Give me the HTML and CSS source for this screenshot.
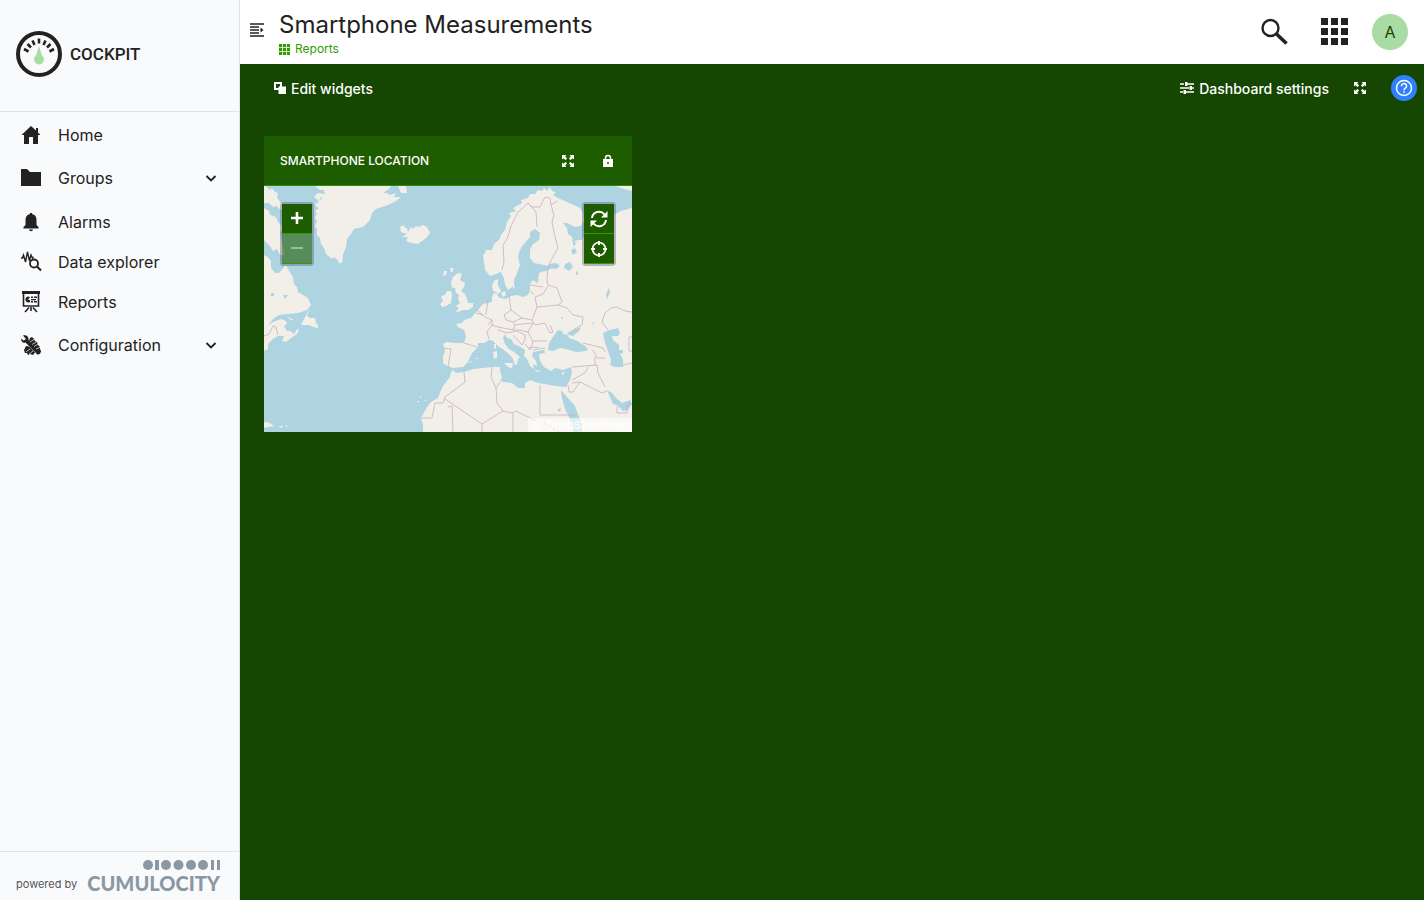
FILE: index.html
```html
<!DOCTYPE html>
<html lang="en">
<head>
  <meta charset="utf-8">
  <title>Smartphone Measurements</title>
  <link rel="stylesheet" href="styles.css">
</head>
<body>
  <div class="app">
    <aside class="navigator">
      <div class="app-title">
        <svg class="app-logo" viewBox="0 0 46 46">
          <circle cx="23" cy="23" r="21" fill="none" stroke="#222" stroke-width="4"/>
          <path d="M8 18l4.500 2.500M11.500 13l3.500 3.500M16.500 9.500l2 4.500M23 7.500v5M29.500 9.500l-2 4.500M34.500 13l-3.500 3.500M38 18l-4.500 2.500" fill="none" stroke="#222" stroke-width="2.600"/>
          <path d="M23 15l3 9.500a5 5 0 1 1-6 0z" fill="#a9dba4"/>
        </svg>
        <span>COCKPIT</span>
      </div>

      <nav class="nav">
        <a class="nav-item" href="#">
          <svg class="nav-icon" viewBox="0 0 22 22"><path d="M11 2L1.500 11H4v9h5v-7h4v7h5v-9h2.500L18 8.500V4h-2v2.500z" fill="#222"/></svg>
          <span>Home</span>
        </a>
        <a class="nav-item parent" href="#">
          <svg class="nav-icon" viewBox="0 0 22 22"><path d="M1 2h6l3 3h11v14H1z" fill="#222"/></svg>
          <span>Groups</span>
          <svg class="chevron" viewBox="0 0 12 12"><path d="M1.500 4L6 8.500 10.500 4" fill="none" stroke="#222" stroke-width="1.800"/></svg>
        </a>
        <a class="nav-item" href="#">
          <svg class="nav-icon" viewBox="0 0 22 22"><path d="M10 3V2h2v1c3 .500 4.500 3 4.500 6v5l2 2v1.500h-15V16l2-2V9C5.500 6 7 3.500 10 3zM9 18.500h4a2 1.800 0 0 1-4 0z" fill="#222"/></svg>
          <span>Alarms</span>
        </a>
        <a class="nav-item" href="#">
          <svg class="nav-icon" viewBox="0 0 22 22" fill="none" stroke="#222"><path d="M1 7h1.500l1-3 2 7 2-10 2 9 1.500-6 1.500 3 1-1" stroke-width="1.400"/><circle cx="14" cy="12.500" r="4" stroke-width="1.800"/><path d="M17 15.500l4 4" stroke-width="2.200"/></svg>
          <span>Data explorer</span>
        </a>
        <a class="nav-item" href="#">
          <svg class="nav-icon" viewBox="0 0 22 22"><path d="M2 0h18v3H2z" fill="#222"/><path d="M3.500 2v13h15V2M9 16.500l-4 4.500M13 16.500l4 4.500M11 16v4" fill="none" stroke="#222" stroke-width="1.600"/><path d="M10 6a3 3 0 1 0 0 5V9H8zM11 5.500h2V7h-2zM14 5.500h3V7h-3zM11 8h5v1.200h-5zM11 10h2v1.500h-2zM14 10h3v1.500h-3z" fill="#222"/></svg>
          <span>Reports</span>
        </a>
        <a class="nav-item parent" href="#">
          <svg class="nav-icon" viewBox="0 0 22 22"><path d="M3 1.500c3-1 6 1 5.500 4.500L21 17.500 18 21 5.500 8.500C3 9.500 1 7.500 1 4.500l2.500 2L6 5z" fill="#222"/><path d="M10 4l2-1 2 2 1 2 2 1 1 3 2 2v2l1 2-1 3h-3L9 7zM6 12l3 .500 6 6-2 2.500-3-1-2 1-1-2H5l-1-3z" fill="#222"/><path d="M10 8l5-3M12 10.500l5-3M14 12.500l5-3M16 15l5-2M6 18l4-3M9 20l4-3" stroke="#f9fafc" stroke-width=".700"/></svg>
          <span>Configuration</span>
          <svg class="chevron" viewBox="0 0 12 12"><path d="M1.500 4L6 8.500 10.500 4" fill="none" stroke="#222" stroke-width="1.800"/></svg>
        </a>
      </nav>

      <footer class="powered">
        <span class="powered-by">powered by</span>
        <div class="brand">
          <svg class="brand-dots" viewBox="0 0 77 10" fill="#8b97a3"><circle cx="5" cy="5" r="5"/><path d="M12 0h4v10h-4zM68 0h3v10h-3zM74 0h3v10h-3z"/><circle cx="23" cy="5" r="5"/><circle cx="35.500" cy="5" r="5"/><circle cx="48" cy="5" r="5"/><circle cx="60" cy="5" r="5"/></svg>
          <span class="brand-name">CUMULOCITY</span>
        </div>
      </footer>
    </aside>

    <main class="main">
      <header class="header">
        <button class="icon-btn toggle" aria-label="Toggle navigation">
          <svg viewBox="0 0 14 14" width="14" height="14"><path d="M0 1h14M0 4h9M0 7h9M0 10h9M0 13h14" stroke="#222" stroke-width="1.300"/><path d="M10.500 4.500L13.500 7l-3 2.500z" fill="#222"/></svg>
        </button>
        <div class="page-title">
          <h1>Smartphone Measurements</h1>
          <a class="breadcrumb" href="#">
            <svg viewBox="0 0 11 11" width="11" height="11"><path d="M0 0h3.200v3.200H0zM4 0h3.200v3.200H4zM8 0h3v3.200H8zM0 4h3.200v3.200H0zM4 4h3.200v3.200H4zM8 4h3v3.200H8zM0 8h3.200v3H0zM4 8h3.200v3H4zM8 8h3v3H8z" fill="#2f9c00"/></svg>
            <span>Reports</span>
          </a>
        </div>
        <div class="header-tools">
          <button class="icon-btn" aria-label="Search">
            <svg viewBox="0 0 28 28" width="28" height="28" fill="none" stroke="#222"><circle cx="10.500" cy="10" r="8" stroke-width="2.400"/><path d="M16.500 16l10 9.500" stroke-width="3.600"/></svg>
          </button>
          <button class="icon-btn" aria-label="Applications">
            <svg viewBox="0 0 28 28" width="28" height="28"><path d="M1 0h7v7H1zM11 0h7v7h-7zM21 0h7v7h-7zM1 10h7v7H1zM11 10h7v7h-7zM21 10h7v7h-7zM1 20h7v7H1zM11 20h7v7h-7zM21 20h7v7h-7z" fill="#222"/></svg>
          </button>
          <button class="avatar">A</button>
        </div>
      </header>

      <div class="action-bar">
        <button class="action">
          <svg viewBox="0 0 12 12" width="12" height="12"><path d="M1 1h6v6H1z" fill="none" stroke="#fff" stroke-width="2"/><path d="M4.500 4.500H12V12H4.500z" fill="#fff"/></svg>
          Edit widgets
        </button>
        <div class="action-right">
          <button class="action">
            <svg viewBox="0 0 14 12" width="14" height="12"><path d="M0 2h4M7 2h7M0 6h9M12 6h2M0 10h3M6 10h8" stroke="#fff" stroke-width="1.500"/><path d="M5 0h2.500v4H5zM9.500 4H12v4H9.500zM3.500 8H6v4H3.500z" fill="#fff"/></svg>
            Dashboard settings
          </button>
          <button class="icon-btn" aria-label="Full screen">
            <svg viewBox="0 0 12 12" width="12" height="12"><path d="M0 0h4.500L3.200 1.300 5 3.500 3.500 5 1.300 3.200 0 4.500zM12 0v4.500l-1.300-1.300L8.500 5 7 3.500l1.800-2.200L7.500 0zM0 12V7.500l1.300 1.300L3.500 7 5 8.500l-1.800 2.200L4.500 12zM12 12H7.500l1.300-1.300L7 8.500 8.500 7l2.200 1.800L12 7.500z" fill="#fff"/></svg>
          </button>
          <button class="help" aria-label="Help">
            <svg viewBox="0 0 18 18" width="18" height="18" fill="none" stroke="#fff"><circle cx="9" cy="9" r="7.500" stroke-width="1.500"/><path d="M6.500 7.200a2.500 2.500 0 1 1 3.800 2Q9 10 9 11.200M9 12.200v1.600" stroke-width="1.500"/></svg>
          </button>
        </div>
      </div>

      <section class="dashboard">
        <article class="widget">
          <div class="widget-header">
            <h2>SMARTPHONE LOCATION</h2>
            <button class="icon-btn" aria-label="Expand">
              <svg viewBox="0 0 12 12" width="12" height="12"><path d="M0 0h4.500L3.200 1.300 5 3.500 3.500 5 1.300 3.200 0 4.500zM12 0v4.500l-1.300-1.300L8.500 5 7 3.500l1.800-2.200L7.500 0zM0 12V7.500l1.300 1.300L3.500 7 5 8.500l-1.800 2.200L4.500 12zM12 12H7.500l1.300-1.300L7 8.500 8.500 7l2.200 1.800L12 7.500z" fill="#fff"/></svg>
            </button>
            <button class="icon-btn" aria-label="Lock">
              <svg viewBox="0 0 12 14" width="12" height="14"><path d="M1 5h10v8H1z" fill="#fff"/><path d="M3.500 6V4a2.500 2.500 0 0 1 5 0v2" fill="none" stroke="#fff" stroke-width="1.500"/><circle cx="6" cy="9" r="1" fill="#1d5d00"/></svg>
            </button>
          </div>
          <div class="map">
            <svg class="map-tiles" viewBox="0 0 368 246" preserveAspectRatio="xMidYMid slice">
              <g class="land">
                <!-- North America -->
                <path d="M0 0L3 1 6 4 8 2 11 6 14 7 13 11 16 16 21 21 17 24 12 20 9 21 5 17 0 17z"/>
                <path d="M0 22L5 25 6 29 12 31 14 36 19 41 16 47 18 57 21 69 16 69 13 63 9 65 6 60 0 54z"/>
                <path d="M0 69L4 71 7 75 7 82 11 87 15 87 20 81 22 79 25 85 29 91 30 98 33 101 34 106 39 109 44 112 47 119 43 124 34 127 24 128 15 129 10 132 4 139 9 136 17 133 22 135 23 138 20 140 23 145 26 145 30 148 33 143 35 144 33 148 27 152 22 156 18 155 20 150 14 150 9 153 4 158 4 163 0 165z"/>
                <path d="M46 122L43 130 46 132 51 132 52 137 54 139 54 143 51 141 49 141 45 139 37 139 40 133z"/>
                <path d="M22 130l8 4-3 0zM0 236l6 1 4 3-6 1-4 1zM14 240l5 0-1 2zM21 239l3 1-2 1z"/>
                <!-- Greenland -->
                <path d="M51 0l5 4 4 0 1 4-8-1 3 4 3 1-6 4 4 1-5 3 3 2-4 3 2 2-2 5 2 3-2 5 2 3 0 6 3 3 1 6 3 4 2 6 6 5 1-2 4 2 2 4 3 0 1-8 3-8 1-8 4-5 3-5 9-2 7-7 2-7 4-4 12-4 8-4 5-4-7 0 2-4-6 2-3-2-4 0 6-4 2-3z"/>
                <path d="M134 0h8l1 7-6 0zM50 11l4-4 3 3-2 5zM51 18l5-2 2 4-4 2z"/>
                <!-- Iceland -->
                <path d="M136 41l4-2 1 3 2 0 1 4 3-5 2 2 3-3 3 1 4-2 4 2 3 6-4 5-8 6-6-1-6-2 2-4-6 0 5-3-6-2z"/>
                <!-- British Isles -->
                <path d="M189 91L194 87 198 88 196 94 201 97 200 101 197 105 201 108 203 113 204 117 209 117 209 121 204 124 199 124 191 127 195 122 192 120 196 117 194 113 195 109 192 107 191 102 188 102 187 96z"/>
                <path d="M183 105L187 105 188 109 187 117 182 120 178 121 176 118 179 115 177 110 181 109z"/>
                <!-- Europe, Asia and Africa -->
                <path d="M219 69L222 66 221 64 228 64 230 58 235 54 237 49 241 44 243 36 247 30 245 27 252 25 249 22 258 17 257 14 264 12 266 8 271 8 274 4 278 5 280 2 283 5 286 1 288 5 292 6 289 9 294 12 303 16 312 20 316 22 319 27 320 34 317 40 311 41 303 37 299 37 303 42 304 48 308 51 309 56 314 54 318 54 321 49 320 42 326 38 330 40 335 34 343 32 351 28 357 25 368 22V246H159L159 239 157 232 163 221 167 216 174 212 177 204 179 200 186 191 187 186 189 184 192 187 200 186 209 183 219 182 228 181 236 181 236 185 238 191 236 195 240 196 248 197 254 202 261 202 261 197 266 194 274 197 286 199 292 200 302 201 306 194 308 186 307 181 299 184 291 182 287 185 280 181 276 175 275 168 281 167 280 164 275 165 269 166 268 170 272 175 273 180 269 178 270 183 266 180 263 173 260 170 261 164 255 160 250 158 247 153 243 152 241 148 239 152 241 158 245 163 250 166 256 171 254 173 253 178 251 179 249 173 246 169 240 164 234 160 229 155 225 154 220 157 214 157 214 161 208 167 206 171 204 176 199 181 189 182 183 180 179 177 179 171 181 165 179 158 183 156 191 157 200 157 202 151 200 144 194 141 192 138 198 137 200 134 207 132 213 125 219 118 228 116 228 111 230 107 228 100 230 95 234 93 234 99 237 105 233 109 236 112 242 113 247 110 253 109 259 111 264 109 266 104 266 98 269 94 273 97 275 94 273 89 277 86 282 85 288 82 281 79 275 78 270 77 266 72 266 64 268 59 275 54 276 47 271 43 266 46 266 51 259 59 256 64 254 71 256 79 253 87 250 94 250 100 244 104 241 99 240 92 237 86 232 88 226 90 221 84z"/>
                <path d="M237 107l4-2 1 4-3 2zM230 158l2 0 0 5-2-1zM229 166l4-1 0 7-3 1zM240 177l9 0-1 5-4-1zM271 184l6 1-2 1-4-1zM297 187l4-1-2 3zM276 170l2 1-2 1zM278 176l2 1-2 1zM250 98l1 4-2 1z"/>
                <path d="M351 0l17 0v5l-8-2zM153 215l2 0 0 1-2 0zM156 210l2 1-2 1zM160 214l3 0-2 1zM211 172l4 0-3 1zM205 176l3-1-1 2zM180 85l3 0-1 4-3 1zM186 82l3 0 0 4-2 0z"/>
              </g>
              <g class="water">
                <path d="M294 144L298 145 299 148 304 149 305 152 311 154 320 159 324 163 322 165 312 166 302 163 296 162 289 165 284 164 285 157 289 151z"/>
                <path d="M303 147l6-3 8-3-2 4-6 5-4-1z"/>
                <path d="M339 147L346 144 354 142 356 147 354 150 348 150 349 154 355 159 355 164 359 164 359 167 356 168 359 173 359 181 351 181 346 179 347 174 344 165 341 157z"/>
                <path d="M297 204L303 211 311 220 315 231 318 238V246H309L306 233 301 223 298 212z"/>
                <path d="M343 204L348 207 352 212 358 217 366 214 368 218 364 224 359 225 353 219 349 218z"/>
                <path d="M267 84l7 1 1 6-9 1zM285 78l7-1 4 3-4 3-8-1zM301 78l5-2 3 5-4 4-5-3zM312 85l3 3-3 1zM307 64l4-2 2 4-4 3zM308 54l4 3-2 4zM342 108l3-6 1 4-3 7zM297 131l3 1-3 1zM7 107l3 0 0 3-3 0zM19 109l5 0-3 4zM328 138l2-3-1 4zM293 224l4-2-1 4z"/>
              </g>
              <path class="border" d="M238 84L240 76 239 59 244 51 247 40 254 26 259 22 264 17 272 26 273 41M264 17L268 21 276 21 281 11 286 12 287 19 293 15M287 19L290 29 288 36 291 51 294 62 286 76 284 81 283 94 284 99 293 102 298 116 294 119 303 122 309 129 319 131 318 139 309 144M284 100L279 108 271 111 273 121 294 119M266 99L279 101M266 105L270 109M273 121L268 134 271 139 281 137 286 147 289 146 286 139M269 155L283 155M269 164L281 162"/>
              <path class="border" d="M245 109L247 124 240 129 242 134 249 136 258 132 268 134M247 124L258 132M251 139L249 144 234 141 228 139 223 146 225 153M249 136L251 139 258 138 269 137M249 144L256 144 264 146 269 137M234 144L243 147 253 145 261 149 261 154M249 149L258 159 261 154M264 146L269 156 266 164 261 158M213 124L221 131 228 134 224 139M212 127L219 129M224 114L222 129M228 134L228 139M230 106L233 107M200 157L213 161M179 162L187 163 184 181M264 162L272 161 275 162"/>
              <path class="border" d="M200 186L201 196 181 211 179 217H171L168 232H157M181 213L218 238 239 225 248 227 252 225 276 237M228 181L227 191 232 202 233 217 239 225M236 196L232 202M218 238V246M188 220L189 246M249 227V246M276 199V229H311M188 220L184 221M280 237L295 246M308 181L333 179 334 187 341 201M308 194L321 187 324 181M304 199L305 206 309 206 316 196 308 197M316 196L338 207 343 205M319 157L339 162 341 166M329 164L333 172 341 172M331 171L331 179M344 144L338 136 341 127 347 122 353 121 361 125 368 126M368 151H365V165H368M359 179L368 177M353 220L353 227H363L363 220 367 217M0 150L5 148 9 140 12 141 14 149"/>
            </svg>
            <div class="map-controls zoom">
              <button aria-label="Zoom in"><svg viewBox="0 0 14 14" width="14" height="14"><path d="M1 6h12M7 0v12" stroke="#fff" stroke-width="2.600"/></svg></button>
              <button aria-label="Zoom out" disabled><svg viewBox="0 0 14 14" width="14" height="14"><path d="M1 6h12" stroke="#9bd49b" stroke-width="1.600"/></svg></button>
            </div>
            <div class="map-controls locate">
              <button aria-label="Refresh"><svg viewBox="0 0 18 18" width="18" height="18" fill="none" stroke="#fff" stroke-width="2"><path d="M2 8a7 7 0 0 1 12.500-3.500M16 10a7 7 0 0 1-12.500 3.500"/><path d="M17.500 1v6.500H11zM.500 17v-6.500H7z" fill="#fff" stroke="none"/></svg></button>
              <button aria-label="Center"><svg viewBox="0 0 18 18" width="18" height="18" fill="none" stroke="#fff"><circle cx="9" cy="9" r="6.500" stroke-width="1.700"/><path d="M9 1v4M9 13v4M1 9h4M13 9h4" stroke-width="2"/></svg></button>
            </div>
            <div class="attribution"><span>©</span><a href="#">OpenStreetMap</a></div>
          </div>
        </article>
      </section>
    </main>
  </div>
</body>
</html>
```
FILE: styles.css
```css
* {
  box-sizing: border-box;
}

body {
  margin: 0;
  font-family: Inter, Roboto, sans-serif;
  font-size: 16px;
  color: #222;
}

a {
  color: inherit;
  text-decoration: none;
}

button {
  font-family: inherit;
  border: 0;
  padding: 0;
  background: none;
  cursor: pointer;
}

svg {
  display: block;
  flex: none;
}

.app {
  display: flex;
  min-height: 100vh;
}

/* navigator */
.navigator {
  display: flex;
  flex-direction: column;
  width: 240px;
  flex: none;
  background: #f9fafc;
  border-right: 1px solid #e0e3e6;
}

.app-title {
  display: flex;
  align-items: center;
  gap: 8px;
  height: 112px;
  padding: 0 16px 4px;
  border-bottom: 1px solid #e0e3e6;
  font-family: Roboto, sans-serif;
  font-size: 17px;
  font-weight: 500;
}

.app-logo {
  width: 46px;
  height: 46px;
}

.nav {
  flex: 1;
  padding-top: 3px;
}

.nav-item {
  display: flex;
  align-items: center;
  gap: 16px;
  height: 40px;
  padding: 0 20px;
}

.nav-item.parent {
  height: 47px;
  padding-bottom: 1px;
}

.nav-icon {
  width: 22px;
  height: 22px;
}

.chevron {
  width: 12px;
  height: 12px;
  margin-left: auto;
  margin-right: 2px;
}

.powered {
  display: flex;
  align-items: flex-end;
  justify-content: space-between;
  height: 49px;
  padding: 0 19px 8px 16px;
  border-top: 1px solid #e0e3e6;
}

.powered-by {
  font-size: 11px;
  line-height: 16px;
  color: #555;
  white-space: nowrap;
}

.brand {
  display: flex;
  flex-direction: column;
  align-items: flex-end;
  gap: 4px;
}

.brand-dots {
  width: 77px;
  height: 10px;
}

.brand-name {
  font-family: Lato, sans-serif;
  font-size: 20px;
  font-weight: 900;
  line-height: 18px;
  color: #8b97a3;
}

/* header */
.main {
  flex: 1;
  min-width: 0;
  display: flex;
  flex-direction: column;
  background: #154702;
}

.header {
  display: flex;
  align-items: center;
  height: 64px;
  padding: 0 16px 0 10px;
  background: #fff;
}

.icon-btn {
  display: flex;
}

.toggle {
  padding-bottom: 4px;
}

.page-title {
  flex: 1;
  display: flex;
  flex-direction: column;
  align-items: flex-start;
  padding-top: 2px;
  margin-left: 15px;
}

.page-title h1 {
  margin: 0;
  font-size: 24px;
  font-weight: 400;
  line-height: 32px;
}

.breadcrumb {
  display: flex;
  align-items: center;
  gap: 5px;
  font-size: 12px;
  line-height: 16px;
  color: #2f9c00;
}

.header-tools {
  display: flex;
  align-items: center;
  gap: 24px;
}

.header-tools .icon-btn {
  padding: 0 0 0 8px;
}

.avatar {
  width: 36px;
  height: 36px;
  border-radius: 50%;
  background: #a9dba4;
  color: #154702;
  font-size: 16px;
}

/* action bar */
.action-bar {
  display: flex;
  align-items: center;
  justify-content: space-between;
  height: 48px;
  padding: 0 7px 0 34px;
}

.action {
  display: flex;
  align-items: center;
  gap: 5px;
  color: #fff;
  font-size: 14px;
  font-weight: 500;
}

.action-right {
  display: flex;
  align-items: center;
  gap: 25px;
}

.help {
  display: flex;
  align-items: center;
  justify-content: center;
  width: 26px;
  height: 26px;
  border-radius: 50%;
  background: #2f80ff;
}

/* dashboard */
.dashboard {
  display: grid;
  grid-template-columns: repeat(3, 1fr);
  gap: 16px;
  padding: 24px;
}

.widget-header {
  display: flex;
  align-items: center;
  gap: 28px;
  height: 50px;
  padding: 0 18px 0 16px;
  background: #1d5d00;
  border-bottom: 1px solid #2f8c00;
}

.widget-header h2 {
  flex: 1;
  margin: 0;
  font-size: 12px;
  font-weight: 500;
  color: #fff;
}

.map {
  position: relative;
  aspect-ratio: 368 / 246;
  background: #aed3e1;
  overflow: hidden;
}

.map-tiles {
  width: 100%;
  height: 100%;
}

.land {
  fill: #f2efe9;
}

.water {
  fill: #aed3e1;
}

.border {
  fill: none;
  stroke: #c6aec2;
  stroke-width: .8;
}

.map-controls {
  position: absolute;
  top: 16px;
  border: 2px solid rgba(90, 90, 120, .4);
  border-radius: 4px;
}

.map-controls.zoom {
  left: 16px;
}

.map-controls.locate {
  right: 16px;
}

.map-controls button {
  display: flex;
  align-items: center;
  justify-content: center;
  width: 30px;
  height: 30px;
  background: #1d5d00;
  border-bottom: 1px solid #2f9c00;
}

.map-controls button:disabled {
  background: rgba(29, 93, 0, .6);
}

.attribution {
  position: absolute;
  right: 0;
  bottom: 0;
  display: flex;
  gap: 4px;
  padding: 0 4px;
  background: rgba(255, 255, 255, .6);
  color: #fff;
  font-size: 11px;
  line-height: 14px;
}
```
